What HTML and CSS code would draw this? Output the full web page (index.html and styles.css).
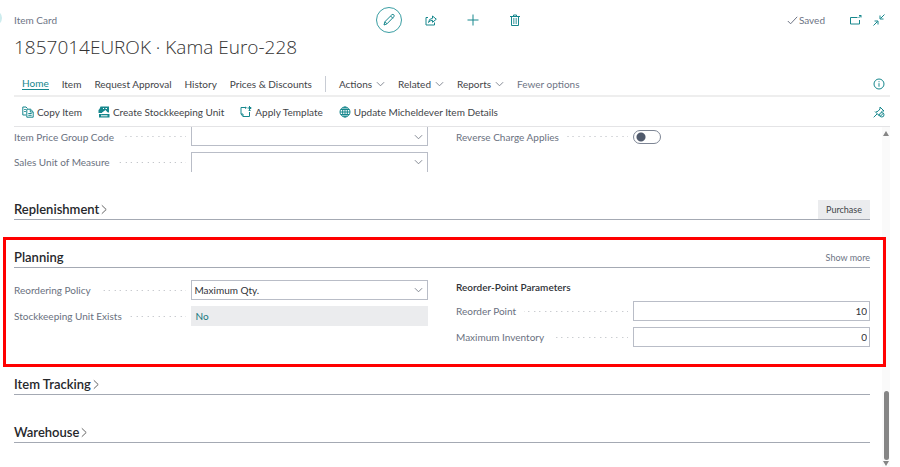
FILE: index.html
```html
<!DOCTYPE html>
<html lang="en">
<head>
<meta charset="utf-8">
<title>Item Card</title>
<link rel="stylesheet" href="styles.css">
</head>
<body>
<svg class="sprite" aria-hidden="true">
  <symbol id="down" viewBox="0 0 10 6"><path d="M1 1l4 4 4-4"/></symbol>
  <symbol id="right" viewBox="0 0 6 10"><path d="M.8.8L5.2 5 .8 9.2"/></symbol>
</svg>
<header class="top">
  <div class="bar">
    <span class="crumb">Item Card</span>
    <div class="tools">
      <button class="tool ring" aria-label="Edit"><svg width="14" height="14" viewBox="0 0 14 14"><path d="M2 12l.9-3.300 6.900-6.900q1.200-.9 2 0 .8.9 0 2L5 10.800zM8.600 3l2.300 2.300M2.900 8.700L5 10.800"/></svg></button>
      <button class="tool" aria-label="Share"><svg width="12" height="12" viewBox="0 0 12 12"><path d="M3 3.500H1v7.500h8.500V8.500M3.500 8.500q.3-4 4-4.200V2L11.300 5.200 7.500 8.300V6.300q-2.500 0-4 2.200z"/></svg></button>
      <button class="tool" aria-label="New"><svg width="12" height="12" viewBox="0 0 12 12"><path d="M6 .5v11M.5 6h11"/></svg></button>
      <button class="tool" aria-label="Delete"><svg width="12" height="12" viewBox="0 0 12 12"><path d="M1 2.500h10M4.500 2.500V1h3v1.500M2.500 2.500v9h7v-9"/><path class="thin" d="M4.500 4v6M6 4v6M7.500 4v6"/></svg></button>
    </div>
    <div class="status">
      <span class="saved"><svg width="11" height="9" viewBox="0 0 11 9"><path d="M.8 5l2.800 2.800L10.200.8"/></svg>Saved</span>
      <button class="icon" aria-label="Open in new window"><svg width="12" height="12" viewBox="0 0 12 12"><path d="M7.500 3.500h-7v6.500h9V6M8.500 4L11 1.500M9 1.500h2v2"/></svg></button>
      <button class="icon" aria-label="Collapse"><svg width="12" height="12" viewBox="0 0 12 12"><path d="M11.500.5L7.500 4.500M7 1.500V5h3.500M.5 11.500l4-4M1.500 7H5v3.500"/></svg></button>
    </div>
  </div>
  <h1>1857014EUROK · Kama Euro-228</h1>
  <nav class="tabs">
    <a class="on" href="#home">Home</a>
    <a href="#item">Item</a>
    <a href="#approval">Request Approval</a>
    <a href="#history">History</a>
    <a href="#prices">Prices &amp; Discounts</a>
    <span class="divider"></span>
    <button>Actions <svg class="chev"><use href="#down"/></svg></button>
    <button>Related <svg class="chev"><use href="#down"/></svg></button>
    <button>Reports <svg class="chev"><use href="#down"/></svg></button>
    <button class="muted">Fewer options</button>
    <button class="icon end" aria-label="Details"><svg width="12" height="12" viewBox="0 0 12 12"><circle cx="6" cy="6" r="5"/><path d="M6 5.200v3.500M6 3.200v1"/></svg></button>
  </nav>
  <div class="actions">
    <button><svg width="12" height="12" viewBox="0 0 12 12"><path d="M4 9H.8V1H4l1.500 1.500M2.200 3.500h1.600M2.200 5.500h1.600M4.800 3.200h3.700l2.700 2.600v5.400H4.800zM8.300 3.400V6H11M6.300 7.500h3.400M6.300 9.300h3.400"/></svg>Copy Item</button>
    <button><svg width="12" height="12" viewBox="0 0 12 12"><path class="fill" d="M2.500.5H11v6H9.500L7.500 4 4 7H.5V4L1.500 3zM1 8h10.500v3.500H1z"/><path class="light" d="M5 2.500h1M7.500 2.500h1.500M3 8l4-3 3 2.500M3 9.800h6.500"/></svg>Create Stockkeeping Unit</button>
    <button><svg width="12" height="12" viewBox="0 0 12 12"><path d="M5.500 1.500H1v6.500l2 2.500h6.500V6M1 8h2v2.500M9.500 0v4M7.500 2h4"/><path class="fill" d="M5 .5l2 1.200-2 1.300zM8.300 5l1.300-2 1.300 2zM9 1h2v2H9z"/></svg>Apply Template</button>
    <button><svg width="12" height="12" viewBox="0 0 12 12"><circle cx="6" cy="6" r="5"/><ellipse cx="6" cy="6" rx="2.400" ry="5"/><path d="M1 6h10M6 1v10M1.800 3.500h8.400M1.800 8.500h8.400"/></svg>Update Micheldever Item Details</button>
    <button class="icon end" aria-label="Pin"><svg width="12" height="12" viewBox="0 0 12 12"><path d="M.7 11.300L4 8M2 5.500l4.500 4.500M3 6q2 0 4-3V1l4 4H9.500L8 6.300M6 9.500V8"/><circle cx="8.800" cy="8.800" r="2.200"/><path d="M7.300 10.300l3-3"/></svg></button>
  </div>
</header>

<div class="scroller">
  <main>
    <div class="columns clipped">
      <div class="fields">
        <div class="field cut-top"><label for="price"><span>Item Price Group Code</span></label><div class="pick"><select id="price"><option></option></select><svg class="chev"><use href="#down"/></svg></div></div>
        <div class="field cut-bottom"><label for="unit"><span>Sales Unit of Measure</span></label><div class="pick"><select id="unit"><option></option></select><svg class="chev"><use href="#down"/></svg></div></div>
      </div>
      <div class="fields">
        <div class="field cut-top"><label for="reverse"><span>Reverse Charge Applies</span></label><input id="reverse" class="switch" type="checkbox"></div>
      </div>
    </div>

    <section>
      <div class="head"><h2>Replenishment<svg class="more"><use href="#right"/></svg></h2><button class="purchase">Purchase</button></div>
    </section>

    <section class="marked">
      <div class="head"><h2>Planning</h2><button class="link">Show more</button></div>
      <div class="columns body">
        <div class="fields">
          <div class="field"><label for="policy"><span>Reordering Policy</span></label><div class="pick"><select id="policy"><option>Maximum Qty.</option></select><svg class="chev"><use href="#down"/></svg></div></div>
          <div class="field"><span class="label"><span>Stockkeeping Unit Exists</span></span><a class="value" href="#sku">No</a></div>
        </div>
        <div class="fields">
          <h3>Reorder-Point Parameters</h3>
          <div class="field"><label for="point"><span>Reorder Point</span></label><input id="point" class="number" type="text" value="10"></div>
          <div class="field"><label for="max"><span>Maximum Inventory</span></label><input id="max" class="number" type="text" value="0"></div>
        </div>
      </div>
    </section>

    <section>
      <div class="head"><h2>Item Tracking<svg class="more"><use href="#right"/></svg></h2></div>
    </section>
    <section>
      <div class="head"><h2>Warehouse<svg class="more"><use href="#right"/></svg></h2></div>
    </section>
  </main>
  <div class="track" aria-hidden="true">
    <svg width="6" height="5" viewBox="0 0 6 5"><path d="M3 0l3 5H0z"/></svg>
    <div class="before"></div>
    <div class="thumb"></div>
    <svg width="6" height="5" viewBox="0 0 6 5"><path d="M0 0h6L3 5z"/></svg>
  </div>
</div>
</body>
</html>
```

FILE: styles.css
```css
* { box-sizing: border-box; }

body {
  margin: 0;
  min-height: 100vh;
  display: flex;
  flex-direction: column;
  overflow: hidden;
  background: #fff;
  color: #424448;
  font: 10px/14px Lato, sans-serif;
}

h1, h2, h3 { margin: 0; }

button, select, input { font: inherit; color: inherit; }

button {
  display: flex;
  align-items: center;
  padding: 0;
  border: 0;
  background: none;
}

a { color: inherit; text-decoration: none; }

svg {
  flex: none;
  fill: none;
  stroke: #16878d;
  stroke-width: 1;
}

.sprite { position: absolute; width: 0; height: 0; }
.fill { fill: #16878d; stroke: none; }
.light { stroke: #fff; }
.thin { stroke-width: .6; }

.chev { width: 9px; height: 6px; stroke: #777d88; }
.more { width: 6px; height: 11px; stroke: #666; }

.top { position: relative; padding: 7px 10px 0 14px; }

/* Edge of the back button */
.top::before {
  content: "";
  position: absolute;
  left: -14px;
  top: 10px;
  width: 16px;
  height: 16px;
  border-radius: 50%;
  background: #cdecee;
}

.bar {
  display: grid;
  grid-template-columns: 1fr auto 1fr;
  align-items: center;
}

.crumb, .muted, .saved { color: #6d7484; }

.tools { display: flex; gap: 16px; }

.tool {
  width: 26px;
  height: 26px;
  justify-content: center;
}

.ring { border: 1px solid #3a9ea3; border-radius: 50%; }

.status {
  display: flex;
  justify-content: flex-end;
  align-items: center;
  gap: 11px;
  padding-right: 5px;
}

.saved {
  display: flex;
  align-items: center;
  gap: 1px;
  margin-right: 14px;
}

.saved svg { stroke: #6d7484; }

h1 {
  font-family: "Open Sans", sans-serif;
  font-size: 19px;
  font-weight: 300;
  line-height: 28px;
  color: #333;
}

.tabs, .actions {
  display: flex;
  align-items: center;
  padding: 0 5px 0 8px;
}

.tabs {
  gap: 13px;
  height: 25px;
  margin-top: 11px;
  border-bottom: 2px solid #eee;
}

.tabs button { gap: 4px; }

.on {
  color: #16878d;
  line-height: 12px;
  border-bottom: 1px solid #16878d;
}

.divider { width: 1px; height: 16px; background: #c8ccd4; }

.actions {
  gap: 16px;
  height: 30px;
  border-bottom: 1px solid #e4e4e6;
}

.actions button { gap: 3px; }

.tabs .end, .actions .end { margin-left: auto; }

.scroller { flex: 1; display: flex; margin-right: 10px; }

main { flex: 1; padding: 0 12px 0 14px; }

.columns {
  display: grid;
  grid-template-columns: 1fr 1fr;
  gap: 28px;
}

.fields {
  display: flex;
  flex-direction: column;
  gap: 6px;
}

.field {
  display: grid;
  grid-template-columns: 3fr 4fr;
  align-items: center;
  height: 20px;
}

.cut-top { height: 19px; }
.cut-top select { border-top: 0; }
.cut-bottom select { border-bottom: 0; }

label, .label {
  display: flex;
  align-items: center;
  gap: 8px;
  color: #6a7180;
}

/* Dotted leader between the caption and its control */
label::after, .label::after {
  content: "";
  flex: 1;
  height: 1px;
  margin-right: 5px;
  background:
    linear-gradient(to left, #b4b7bd 1px, transparent 1px 5px, #b4b7bd 5px 6px, transparent 6px)
    right / 11px 1px repeat-x;
}

.pick { position: relative; height: 100%; }

.pick .chev { position: absolute; right: 5px; top: 7px; }

select, .number {
  appearance: none;
  width: 100%;
  height: 100%;
  padding: 0 2px;
  border: 1px solid #b9bdc7;
  border-radius: 0;
  background: #fff;
  color: #303338;
}

.number { text-align: right; }

.value {
  height: 100%;
  padding-left: 4px;
  line-height: 20px;
  background: #ebecee;
  color: #16777d;
}

.switch {
  appearance: none;
  width: 28px;
  height: 14px;
  margin: 0;
  border: 1px solid #7d8594;
  border-radius: 7px;
  background: radial-gradient(circle at 7px 6px, #505a6c 4px, transparent 5px);
}

section { position: relative; margin-top: 28px; }

.head {
  display: flex;
  align-items: center;
  justify-content: space-between;
  height: 20px;
  border-bottom: 1px solid #a4a9b3;
}

h2 {
  display: flex;
  align-items: center;
  gap: 2px;
  font-size: 13px;
  font-weight: 600;
  line-height: 19px;
  color: #26282c;
}

h3 {
  font-size: 10px;
  font-weight: 600;
  line-height: 15px;
  color: #303338;
}

.purchase, .link { font-size: 9px; }

.purchase {
  height: 100%;
  padding: 0 8px;
  background: #ebecee;
}

.link { color: #6d7484; }

.body { padding-top: 12px; }

/* Highlight frame laid over the planning group */
.marked::after {
  content: "";
  position: absolute;
  inset: -11px -16px -20px -11px;
  border: 3px solid #f00;
  pointer-events: none;
}

.track {
  width: 8px;
  display: flex;
  flex-direction: column;
  align-items: center;
  padding: 4px 0 1px;
  gap: 1px;
  background: #fafafa;
}

.track svg { fill: #858585; stroke: none; }
.before { flex: 252; }

.thumb {
  flex: 69;
  width: 5px;
  border-radius: 3px;
  background: #858585;
}
```
